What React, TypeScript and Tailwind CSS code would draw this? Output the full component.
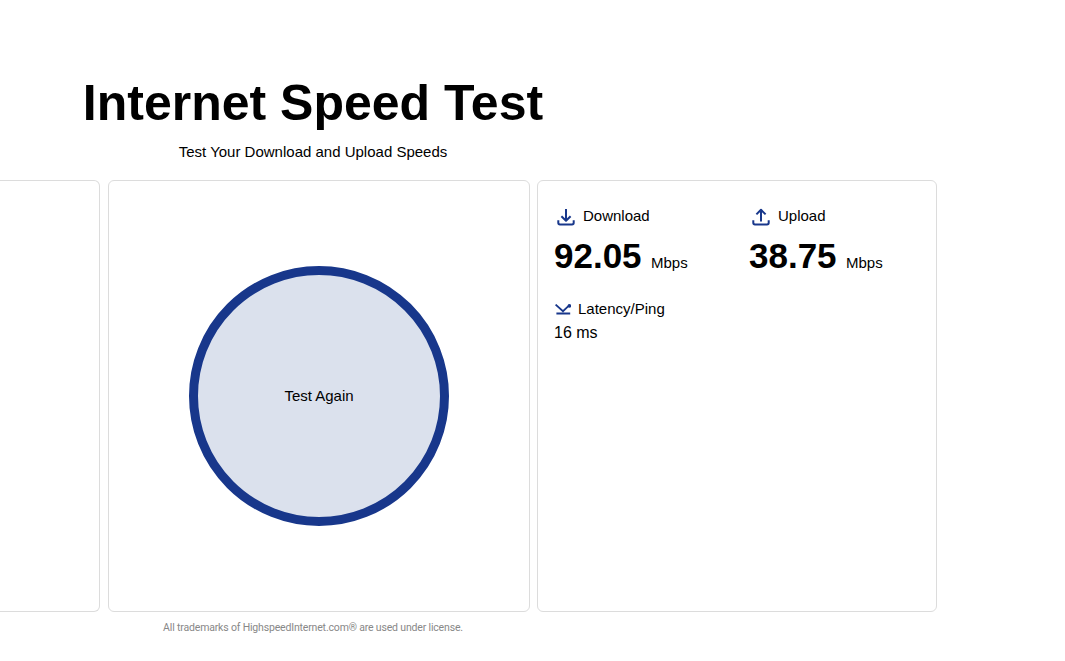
import type { ReactNode } from 'react'

const TransferIcon = ({ up = false }: { up?: boolean }) => (
  <svg
    className="ml-[3px] h-[18px] w-[18px] shrink-0"
    viewBox="0 0 18 18"
    fill="none"
    stroke="#18378b"
    strokeWidth="2"
    strokeLinejoin="round"
  >
    <path d="M1.3 12.2v2.6q0 1.7 1.7 1.7h12q1.7 0 1.7-1.7v-2.6" />
    {up ? <path d="M9 13.5V2M4.4 6.4 9 1.8l4.6 4.6" /> : <path d="M9 1v11.5M4.4 8.2 9 12.8l4.6-4.6" />}
  </svg>
)

const PingIcon = () => (
  <svg className="h-[11px] w-[17px] shrink-0" viewBox="0 0 17 11" fill="none" stroke="#18378b" strokeWidth="1.8">
    <path d="M1.6.6 9 7.2 15.4 1.2M2.4 9.5h13.8" />
    <circle cx="15.4" cy="1.9" r="1.8" fill="#18378b" stroke="none" />
  </svg>
)

function Speed({ icon, label, value }: { icon: ReactNode; label: string; value: string }) {
  return (
    <div className="w-[195px] shrink-0">
      <div className="flex h-5 items-center">
        <div className="pt-px">{icon}</div>
        <span className="ml-2 text-[15px] leading-5">{label}</span>
      </div>
      <div className="mt-[10px] flex h-10 items-baseline leading-10">
        <span className="w-[97px] text-[35px] font-bold">{value}</span>
        <span className="text-[15px]">Mbps</span>
      </div>
    </div>
  )
}

export default function App() {
  return (
    <div className="h-[661px] w-[1065px] overflow-hidden bg-white font-['Liberation_Sans',Arial,sans-serif] text-black">
      <header className="flex h-[180px] w-[626px] flex-col items-center pt-[73px] text-center">
        <h1 className="text-[50px] leading-[60px] font-bold whitespace-nowrap">Internet Speed Test</h1>
        <p className="mt-[9px] text-[15px] leading-5">Test Your Download and Upload Speeds</p>
      </header>

      <main className="flex h-[432px]">
        <section className="w-[100px] rounded-r-md border border-l-0 border-[#dcdcdc]" />
        <section className="ml-2 flex w-[422px] items-center justify-center rounded-md border border-[#dcdcdc]">
          <button className="h-[260px] w-[260px] rounded-full border-[9px] border-[#18378b] bg-[#dbe1ed] text-[15px]">
            Test Again
          </button>
        </section>
        <section className="ml-[7px] w-[400px] rounded-md border border-[#dcdcdc] pt-[25px] pl-4">
          <div className="flex">
            <Speed icon={<TransferIcon />} label="Download" value="92.05" />
            <Speed icon={<TransferIcon up />} label="Upload" value="38.75" />
          </div>
          <div className="mt-[23px] flex h-5 items-center">
            <PingIcon />
            <span className="ml-[7px] text-[15px]">Latency/Ping</span>
          </div>
          <p className="mt-0.5 text-base">16 ms</p>
        </section>
      </main>

      <footer className="w-[626px] pt-2 text-center font-['Roboto',sans-serif] text-[10.5px] leading-4 tracking-[-0.17px] text-[#888]">
        All trademarks of HighspeedInternet.com® are used under license.
      </footer>
    </div>
  )
}
